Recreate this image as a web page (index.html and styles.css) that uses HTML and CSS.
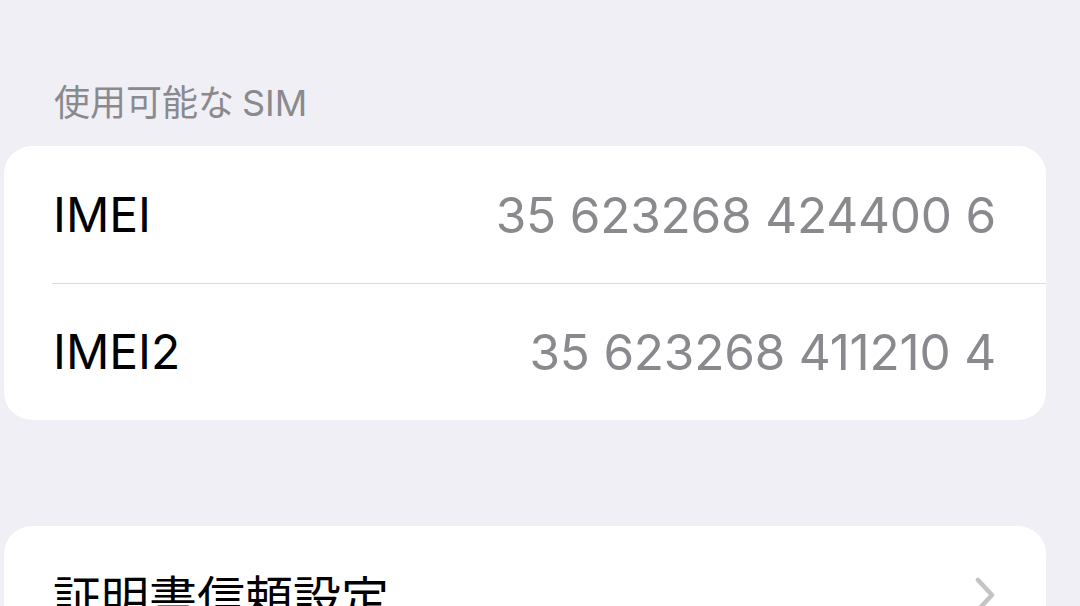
FILE: index.html
```html
<!DOCTYPE html>
<html lang="ja">
<head>
  <meta charset="UTF-8">
  <title>情報</title>
  <meta name="viewport" content="width=device-width, initial-scale=1.0" />
  <link rel="stylesheet" href="styles.css">
</head>
<body>

  <div class="settings">
    <div class="section-title">使用可能な<span class="latin">SIM</span></div>

    <div class="group">
      <div class="row">
        <span class="label">IMEI</span>
        <span class="value">35 623268 424400 6</span>
      </div>
      <div class="row">
        <span class="label">IMEI2</span>
        <span class="value">35 623268 411210 4</span>
      </div>
    </div>

    <div class="group group-next">
      <div class="row">
        <span class="label">証明書信頼設定</span>
        <svg class="chevron" width="22" height="36" viewBox="0 0 22 36">
          <path d="M4 3 L18 18 L4 33" fill="none" stroke="#c4c4c7" stroke-width="4.5" stroke-linecap="round" stroke-linejoin="round"/>
        </svg>
      </div>
    </div>
  </div>

</body>
</html>
```

FILE: styles.css
```css
:root {
  --bg: #f0eff5;
  --card: #ffffff;
  --text: #000000;
  --muted: #8a8a8e;
  --separator: #dcdce0;
  --font-main: 'Inter', 'Noto Sans CJK JP', sans-serif;
}

body {
  margin: 0;
  height: 606px;
  overflow: hidden;
  background: var(--bg);
  font-family: var(--font-main);
}

.settings {
  padding: 0 34px 0 4px;
}

.section-title {
  height: 146px;
  padding: 78px 0 0 50px;
  box-sizing: border-box;
  font-size: 36px;
  line-height: 50px;
  color: var(--muted);
}

.section-title .latin {
  margin-left: 8px;
}

.group {
  background: var(--card);
  border-radius: 28px;
  overflow: hidden;
}

.group-next {
  margin-top: 106px;
}

.row {
  display: flex;
  align-items: center;
  justify-content: space-between;
  height: 137px;
  padding: 0 50px 0 49px;
  position: relative;
  box-sizing: border-box;
}

.row + .row::before {
  content: "";
  position: absolute;
  top: 0;
  left: 48px;
  right: 0;
  height: 1px;
  background: var(--separator);
}

.label {
  font-size: 48px;
  color: var(--text);
}

.value {
  font-size: 49.5px;
  letter-spacing: -0.2px;
  color: var(--muted);
}

.chevron {
  margin-right: 0;
}
```
